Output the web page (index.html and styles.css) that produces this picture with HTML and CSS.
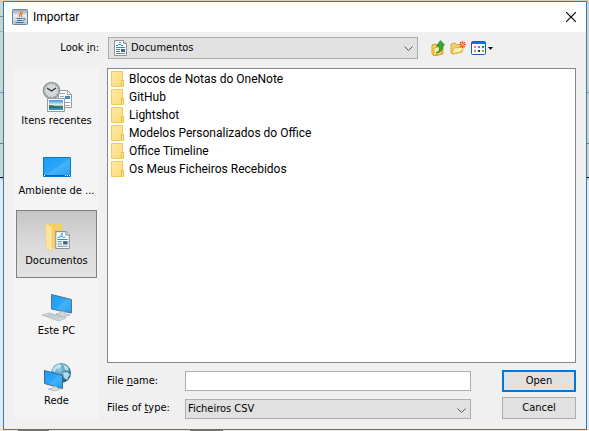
FILE: index.html
```html
<!DOCTYPE html>
<html lang="pt">
<head>
<meta charset="utf-8">
<title>Importar</title>
<link rel="stylesheet" href="styles.css">
</head>
<body>
<svg class="defs" aria-hidden="true">
  <defs>
    <linearGradient id="gold" x1="0" y1="0" x2="1" y2="1"><stop offset="0" stop-color="#ffe7a0"/><stop offset="1" stop-color="#fbdc7c"/></linearGradient>
    <linearGradient id="screen" x1="0" y1="0" x2="1" y2="1"><stop offset="0" stop-color="#1d9bf5"/><stop offset=".5" stop-color="#2aa6fa"/><stop offset=".52" stop-color="#45b3fb"/><stop offset="1" stop-color="#229ff6"/></linearGradient>
    <radialGradient id="globe" cx=".4" cy=".3" r=".75"><stop offset="0" stop-color="#9ed0e4"/><stop offset=".5" stop-color="#4592b4"/><stop offset="1" stop-color="#14506f"/></radialGradient>
    <linearGradient id="photo" x1="0" y1="0" x2="0" y2="1"><stop offset="0" stop-color="#3f8ddb"/><stop offset=".5" stop-color="#e2f2f8"/><stop offset=".65" stop-color="#4c8062"/><stop offset="1" stop-color="#3379a8"/></linearGradient>
    <linearGradient id="java" x1="0" y1="0" x2="0" y2="1"><stop offset="0" stop-color="#8fa4b8"/><stop offset=".4" stop-color="#e9eef2"/><stop offset="1" stop-color="#b4c3d0"/></linearGradient>
    <symbol id="folder" viewBox="0 0 13 16">
      <path d="M.5.5h11v8.5l1 1v5.500H.5z" fill="url(#gold)" stroke="#eecb5a"/>
      <path d="M10.500 15V9.500h2V15" fill="#ffe9a6" stroke="#e7bd3f"/>
    </symbol>
    <symbol id="page" viewBox="0 0 13 16">
      <path d="M.5.5h9l3 3v12H.5z" fill="#fff" stroke="#8f9294"/>
      <path d="M9.500.5v3h3" fill="#e5e5e5" stroke="#8f9294"/>
      <path d="M2 5.500h2M5 2.500h2M4 4.500h3M7 5.500h2" fill="none" stroke="#2b8fd0"/>
      <path d="M2 7.500h9M2 9.500h4" stroke="#2b91ca"/>
      <path d="M2 11.500h4M2 13.500h9" stroke="#77858d"/>
      <path d="M7 9h4v3H7z" fill="#2b6c8e"/>
    </symbol>
  </defs>
</svg>
<main class="dialog">
  <header class="titlebar">
    <svg class="java" viewBox="0 0 16 16" aria-hidden="true">
      <rect x=".5" y=".5" width="15" height="15" rx="1" fill="url(#java)" stroke="#71869a"/>
      <path d="M9 2c1 2-3 3-1.500 6M11 4c-2 1-2.500 2-1 4" fill="none" stroke="#e8791d" stroke-width="1.300"/>
      <path d="M4.500 9.500h6M5 11.500h5M3.500 13.500h8M11 9.500c3-1 2.500 2-.5 2" fill="none" stroke="#47739a"/>
    </svg>
    <h1>Importar</h1>
    <button class="close" type="button" aria-label="Close"><svg viewBox="0 0 10 10"><path d="M0 0l10 10M10 0L0 10" stroke="#000" stroke-width="1.100"/></svg></button>
  </header>
  <form class="body">
    <div class="toolbar">
      <label class="look" for="look">Look <u>i</u>n:</label>
      <div class="combo with-icon">
        <svg class="combo-icon" aria-hidden="true"><use href="#page"/></svg>
        <select id="look"><option>Documentos</option></select>
        <svg class="chevron" viewBox="0 0 9 5" aria-hidden="true"><path d="M.5.5l4 4 4-4" fill="none" stroke="#555"/></svg>
      </div>
      <div class="tools">
        <button type="button" aria-label="Up one level"><svg class="up" viewBox="0 0 14 16">
          <path d="M1 5l4-1 1 2 6-1v9l-9 2-2-2z" fill="#f6d363" stroke="#d4a12c"/>
          <path d="M3 8l9-2-2 8-7 1z" fill="#ffec9b" stroke="#dbac39"/>
          <path d="M5 13c4-2 4-4 3-7H5.500L9.500.7l4 4.300-2.300.5c.8 4-1.200 7-6.200 7.500z" fill="#35b035" stroke="#167b1b" stroke-width=".8"/></svg></button>
        <button type="button" aria-label="New folder"><svg class="new" viewBox="0 0 16 14">
          <path d="M1 3l4-1 2 2 5-1v8l-9 2-2-1z" fill="#f4d06a" stroke="#d5a53d"/>
          <path d="M4 7l10-1-3 5-9 2z" fill="#fff0a8" stroke="#deb249"/>
          <path d="M12.500 0v7M9 3.500h7M10 1l5 5M15 1l-5 5" stroke="#f3502b" stroke-width="1.200"/><circle cx="12.500" cy="3.500" r="1.300" fill="#ffbf68"/></svg></button>
        <button type="button" aria-label="View menu"><svg class="view" viewBox="0 0 22 14">
          <rect x=".5" y=".5" width="14" height="13" rx="1" fill="#fff" stroke="#0065cf"/><path d="M1 1h13v2H1z" fill="#1675dc"/>
          <path d="M3 5h2v2H3z" fill="#a895bd"/><path d="M7 5h2v2H7z" fill="#378eea"/><path d="M11 5h2v2h-2z" fill="#168c2c"/><path d="M3 9h2v2H3z" fill="#f2764f"/><path d="M7 9h2v2H7z" fill="#12338c"/><path d="M11 9h2v2h-2z" fill="#c49218"/>
          <path d="M17 6h5l-2.500 3z" fill="#000"/></svg></button>
      </div>
    </div>
    <nav class="places" aria-label="Places">
      <button type="button"><svg viewBox="0 0 32 32">
        <path d="M17.500 9.500h9l4 4v13h-13z" fill="#fff" stroke="#969a9c"/><path d="M26.500 9.500v4h4M19 12.500h5M19 15.500h4M19 18.500h4M19 21.500h10M19 24.500h10" fill="none" stroke="#98a5ab"/><path d="M24 15h5v3h-5z" fill="#4185bd"/>
        <circle cx="10.500" cy="9.500" r="8" fill="#d4d8d9" stroke="#91989a" stroke-width="1.600"/><circle cx="10.500" cy="9.500" r="6.500" fill="none" stroke="#8a9294" stroke-dasharray="1 2.400"/><path d="M6 7l4.500 3L15 7" fill="none" stroke="#283235" stroke-width="1.200"/>
        <path d="M6.500 17.500h17v13h-17z" fill="#fff" stroke="#999"/><path d="M8 19h14v10H8z" fill="url(#photo)"/><path d="M8 24l6 1 8 2v2H8z" fill="#287653"/><path d="M8 27h14v2H8z" fill="#3c8bc3"/></svg>Itens recentes</button>
      <button type="button"><svg viewBox="0 0 32 32"><path d="M2.500 6.500h27v19h-27z" fill="url(#screen)" stroke="#087bc7"/><path d="M3 24h26v1H3z" fill="#0866a5"/><path d="M3 24h1v1H3zM24 24h1v1h-1zM26 24h1v1h-1zM28 24h1v1h-1z" fill="#fff"/></svg>Ambiente de ...</button>
      <button type="button" class="selected" aria-pressed="true"><svg viewBox="0 0 32 32"><path d="M5 3h16v24H5z" fill="#f5cf66"/><path d="M5 3l6 3v24l-6-3z" fill="#ffe59b" stroke="#f1cc69" stroke-width=".6"/><use href="#page" x="14" y="10" width="15" height="18"/></svg>Documentos</button>
      <button type="button"><svg viewBox="0 0 32 32">
        <path d="M10.500 3.500l20 5v13.500l-20-4z" fill="url(#screen)" stroke="#4d7690"/><path d="M19 20l5 1v2l5 1-7 2-7-3 4-1z" fill="#d1d8dc" stroke="#a3adb2" stroke-width=".7"/>
        <path d="M1 24l7-2 17 5-7 3z" fill="#e7ebec" stroke="#acb4b8" stroke-width=".8"/><path d="M4 24l15 4.500M7 23l15 4.500M6 26l6-3M10 27l6-3M14 28.500l6-3" stroke="#aab2b5" stroke-width=".7"/></svg>Este PC</button>
      <button type="button"><svg viewBox="0 0 32 32">
        <circle cx="20" cy="12" r="10" fill="url(#globe)"/><path d="M12 7l5-4 4 1-2 3-4 1-1 3-3-1zM22 3l5 3 1 4-4-1-1-3zM22 12l4-1 3 2-3 6-3-2z" fill="#d5edf2" opacity=".8"/>
        <path d="M3.500 9.500l18 5v13l-18-5z" fill="url(#screen)" stroke="#3b6e8d"/><path d="M12 25l4 1v1l4 1-7 2-6-2 5-1z" fill="#d8dee1" stroke="#aab3b7" stroke-width=".7"/></svg>Rede</button>
    </nav>
    <section class="content">
      <ul class="files">
        <li><svg><use href="#folder"/></svg>Blocos de Notas do OneNote</li>
        <li><svg><use href="#folder"/></svg>GitHub</li>
        <li><svg><use href="#folder"/></svg>Lightshot</li>
        <li><svg><use href="#folder"/></svg>Modelos Personalizados do Office</li>
        <li><svg><use href="#folder"/></svg>Office Timeline</li>
        <li><svg><use href="#folder"/></svg>Os Meus Ficheiros Recebidos</li>
      </ul>
      <div class="fields">
        <label for="name">File <u>n</u>ame:</label>
        <input id="name" type="text">
        <button class="action primary" type="button">Open</button>
        <label for="type">Files of <u>t</u>ype:</label>
        <div class="combo type">
          <select id="type"><option>Ficheiros CSV</option></select>
          <svg class="chevron" viewBox="0 0 9 5" aria-hidden="true"><path d="M.5.5l4 4 4-4" fill="none" stroke="#555"/></svg>
        </div>
        <button class="action" type="button">Cancel</button>
      </div>
    </section>
  </form>
</main>
</body>
</html>
```
FILE: styles.css
```css
* { box-sizing: border-box; }
body {
  margin: 0;
  padding: 1px 2px 1px 3px;
  min-height: 100vh;
  display: flex;
  background:
    linear-gradient(#777, #777) 18px 100% / 31px 1px no-repeat,
    linear-gradient(#777, #777) 190px 100% / 33px 1px no-repeat,
    linear-gradient(#000, #000) 0 177px / 100% 1px no-repeat,
    linear-gradient(#888, #888) 0 16px / 3px 1px no-repeat,
    linear-gradient(#b4ae98, #b4ae98) 0 31px / 3px 1px no-repeat,
    linear-gradient(#8295b5, #8295b5) 0 92px / 100% 1px no-repeat,
    linear-gradient(#777, #777) 0 143px / 100% 1px no-repeat,
    linear-gradient(#d6d1c5 0 180px, #e8e8e8 180px);
  color: #000;
  font: 11px/18px "DejaVu Sans Condensed", "Noto Sans", sans-serif;
}
button, input, select { margin: 0; font: inherit; color: inherit; }
button { padding: 0; border: 0; background: none; }
svg { display: block; flex: none; }
.defs { position: absolute; width: 0; height: 0; }
.dialog { flex: 1; min-width: 0; display: flex; flex-direction: column; border: 1px solid #1982d1; background: #f0f0f0; }
.titlebar { display: flex; align-items: center; height: 30px; padding: 0 10px 0 8px; background: #fff; }
.java { width: 16px; height: 16px; }
h1 { flex: 1; margin: 0 0 0 5px; font: 12px/18px Roboto, sans-serif; }
.close svg { width: 10px; height: 10px; }
.body {
  flex: 1;
  display: grid;
  grid-template: 22px 1fr / 85px minmax(0, 1fr);
  gap: 9px 8px;
  padding: 5px 10px 10px;
}
.toolbar { grid-column: 1 / -1; display: flex; align-items: center; }
.look { width: 85px; text-align: right; }
.combo { position: relative; flex: 1; }
.toolbar .combo { margin-left: 9px; }
select { display: block; width: 100%; height: 20px; padding: 0 20px 0 2px; appearance: none; border: 1px solid #adadad; border-radius: 0; background: #e1e1e1; }
.with-icon select { height: 22px; padding-left: 22px; }
.combo-icon { position: absolute; left: 6px; top: 3px; width: 13px; height: 16px; }
.chevron { position: absolute; right: 5px; top: 9px; width: 9px; height: 5px; pointer-events: none; }
.tools { display: flex; align-items: center; gap: 5px; width: 158px; padding-left: 13px; }
.up { width: 14px; height: 16px; }
.new { width: 16px; height: 14px; }
.view { width: 22px; height: 14px; }
.places { display: flex; flex-direction: column; gap: 2px; padding: 2px 2px 1px; background: #f4f4f4; }
.places button { display: flex; flex-direction: column; align-items: center; height: 68px; padding: 10px 0 0; border: 1px solid transparent; white-space: nowrap; line-height: 16px; }
.places svg { width: 32px; height: 32px; }
.places .selected { border: 1px solid #808080; background: linear-gradient(#c5c5c5, #dadada 50%, #e3e3e3); }
.content { display: flex; flex-direction: column; gap: 7px; }
.files { flex: 1; margin: 0; padding: 1px 3px; border: 1px solid #828790; background: #fff; list-style: none; font: 12px/18px Roboto, sans-serif; }
.files li { display: flex; align-items: center; gap: 5px; height: 18px; }
.files svg { width: 13px; height: 16px; }
.fields { display: grid; grid-template: 22px 22px / 78px minmax(0, 1fr) 74px; row-gap: 5px; align-items: center; }
.fields input { height: 20px; border: 1px solid #abadb3; border-radius: 0; background: #fff; padding: 0 2px; }
.type { align-self: end; }
.action { height: 22px; border: 1px solid #adadad; background: #e1e1e1; }
.primary { border: 2px solid #0078d7; }
.fields input, .type { margin-right: 31px; }
```
